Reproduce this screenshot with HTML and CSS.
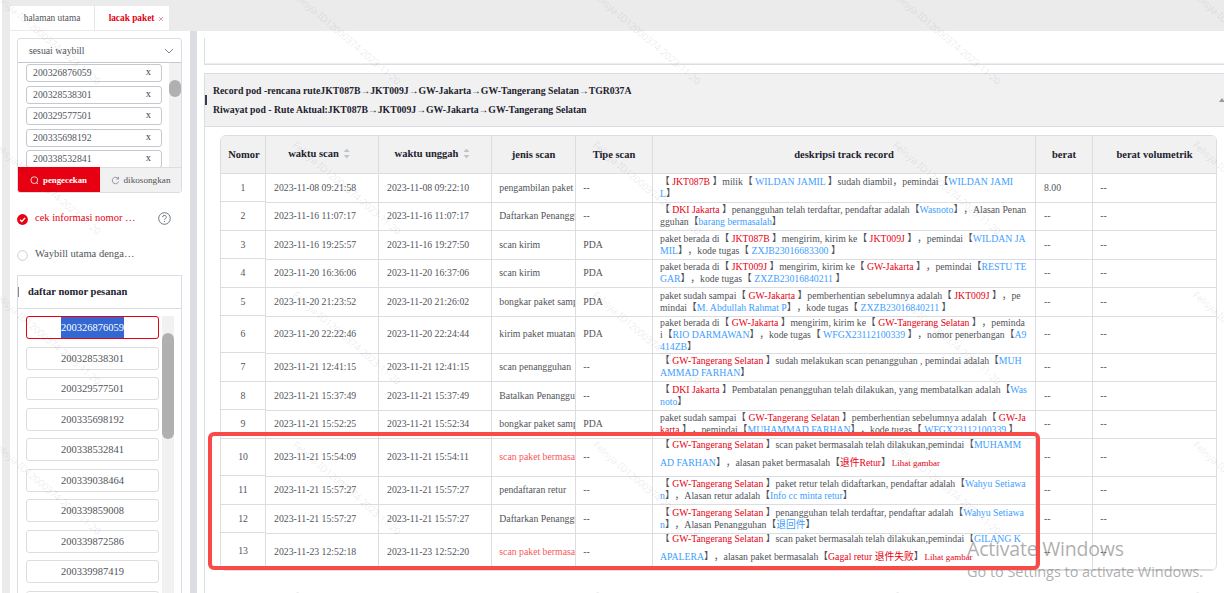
FILE: index.html
```
<!DOCTYPE html>
<html lang="id">
<head>
<meta charset="utf-8">
<title>lacak paket</title>
<link rel="stylesheet" href="styles.css">
</head>
<body>
<div class="app">
  <div class="rail"></div>
  <div class="page">
    <nav class="tabs">
      <div class="tab">halaman utama</div>
      <div class="tab active">lacak paket<svg class="close" viewBox="0 0 6 6"><path d="M1 1l4 4M5 1l-4 4"/></svg></div>
    </nav>
    <div class="body">
      <aside class="side">
        <div class="search">
          <div class="select">sesuai waybill<svg class="chev" viewBox="0 0 10 6"><path d="M1 1l4 4 4-4"/></svg></div>
          <div class="tags">
            <div class="taglist">
              <div class="tag">200326876059<span>x</span></div>
              <div class="tag">200328538301<span>x</span></div>
              <div class="tag">200329577501<span>x</span></div>
              <div class="tag">200335698192<span>x</span></div>
              <div class="tag">200338532841<span>x</span></div>
            </div>
            <div class="track"><div class="thumb"></div></div>
          </div>
          <div class="buttons">
            <div class="btn primary"><svg viewBox="0 0 10 10"><circle cx="4.8" cy="4.6" r="3.8"/><path d="M7.2 7.2l1.8 1.8"/></svg>pengecekan</div>
            <div class="btn"><svg viewBox="0 0 10 10"><path d="M8 3A3.6 3.6 0 1 0 8.5 6M8.4 1v2.4H6"/></svg>dikosongkan</div>
          </div>
        </div>
        <div class="option on"><svg class="radio" viewBox="0 0 12 12"><circle cx="6" cy="6" r="5.9" fill="#e60012"/><path d="M3.3 6.2l2 1.9 3.5-3.9" fill="none" stroke="#fff" stroke-width="1.5"/></svg><span>cek informasi nomor …</span>
          <svg class="help" viewBox="0 0 13 13"><circle cx="6.5" cy="6.5" r="5.8"/><path d="M4.7 5.2a1.8 1.8 0 1 1 2.6 1.5q-.8.4-.8 1.2M6.5 8.9v1"/></svg></div>
        <div class="option two"><svg class="radio" viewBox="0 0 12 12"><circle cx="6" cy="6" r="5.3" fill="#fff" stroke="#c5c8ce"/></svg><span>Waybill utama denga…</span></div>
        <div class="orders">
          <div class="orders-title">daftar nomor pesanan</div>
          <div class="orders-body">
            <div class="orders-list">
              <div class="order sel"><span>200326876059</span></div>
              <div class="order">200328538301</div>
              <div class="order">200329577501</div>
              <div class="order">200335698192</div>
              <div class="order">200338532841</div>
              <div class="order">200339038464</div>
              <div class="order">200339859008</div>
              <div class="order">200339872586</div>
              <div class="order">200339987419</div>
              <div class="order"></div>
            </div>
            <div class="track tall"><div class="thumb"></div></div>
          </div>
        </div>
      </aside>
      <div class="splitter"></div>
      <main class="main">
        <div class="upper"></div>
        <section class="panel">
          <header class="routes">
            <div class="route-text">
              <div class="r1">Record pod -rencana ruteJKT087B→JKT009J→GW-Jakarta→GW-Tangerang Selatan→TGR037A</div>
              <div class="r2">Riwayat pod - Rute Aktual:JKT087B→JKT009J→GW-Jakarta→GW-Tangerang Selatan</div>
            </div>
            <div class="fold"></div>
          </header>
          <div class="table">
            <div class="numbers">
              <div class="th">Nomor</div>
              <div class="n h28">1</div><div class="n h29">2</div><div class="n h28">3</div><div class="n h29">4</div><div class="n h28">5</div><div class="n h37">6</div><div class="n h29">7</div><div class="n h28">8</div><div class="n h29">9</div><div class="n h37">10</div><div class="n h29">11</div><div class="n h28">12</div><div class="n h37">13</div>
            </div>
            <div class="rows">
              <div class="row head">
                <div class="th sortable">waktu scan<i class="sort"></i></div><div class="th sortable">waktu unggah<i class="sort"></i></div><div class="th">jenis scan</div><div class="th">Tipe scan</div><div class="th">deskripsi track record</div><div class="th">berat</div><div class="th">berat volumetrik</div>
              </div>
              <div class="row h29"><div>2023-11-08 09:21:58</div><div>2023-11-08 09:22:10</div><div>pengambilan paket</div><div>--</div>
                <div class="desc"><p>【 <b>JKT087B</b> 】milik【 <a>WILDAN JAMIL</a> 】sudah diambil，pemindai【<a>WILDAN JAMI</a></p><p><a>L</a>】</p></div><div>8.00</div><div>--</div></div>
              <div class="row h28"><div>2023-11-16 11:07:17</div><div>2023-11-16 11:07:17</div><div>Daftarkan Penangguhan</div><div>--</div>
                <div class="desc"><p>【 <b>DKI Jakarta</b> 】penangguhan telah terdaftar, pendaftar adalah【<a>Wasnoto</a>】，Alasan Penan</p><p>gguhan【<a>barang bermasalah</a>】</p></div><div>--</div><div>--</div></div>
              <div class="row h29"><div>2023-11-16 19:25:57</div><div>2023-11-16 19:27:50</div><div>scan kirim</div><div>PDA</div>
                <div class="desc"><p>paket berada di【 <b>JKT087B</b> 】mengirim, kirim ke【 <b>JKT009J</b> 】，pemindai【<a>WILDAN JA</a></p><p><a>MIL</a>】，kode tugas【 <a>ZXJB23016683300</a> 】</p></div><div>--</div><div>--</div></div>
              <div class="row h28"><div>2023-11-20 16:36:06</div><div>2023-11-20 16:37:06</div><div>scan kirim</div><div>PDA</div>
                <div class="desc"><p>paket berada di【 <b>JKT009J</b> 】mengirim, kirim ke【 <b>GW-Jakarta</b> 】，pemindai【<a>RESTU TE</a></p><p><a>GAR</a>】，kode tugas【 <a>ZXZB23016840211</a> 】</p></div><div>--</div><div>--</div></div>
              <div class="row h29"><div>2023-11-20 21:23:52</div><div>2023-11-20 21:26:02</div><div>bongkar paket sampai</div><div>PDA</div>
                <div class="desc"><p>paket sudah sampai【 <b>GW-Jakarta</b> 】pemberhentian sebelumnya adalah【 <b>JKT009J</b> 】，pe</p><p>mindai【<a>M. Abdullah Rahmat P</a>】，kode tugas【 <a>ZXZB23016840211</a> 】</p></div><div>--</div><div>--</div></div>
              <div class="row h37"><div>2023-11-20 22:22:46</div><div>2023-11-20 22:24:44</div><div>kirim paket muatan</div><div>PDA</div>
                <div class="desc"><p>paket berada di【 <b>GW-Jakarta</b> 】mengirim, kirim ke【 <b>GW-Tangerang Selatan</b> 】，peminda</p><p>i【<a>RIO DARMAWAN</a>】，kode tugas【 <a>WFGX23112100339</a> 】，nomor penerbangan【<a>A9</a></p><p><a>414ZB</a>】</p></div><div>--</div><div>--</div></div>
              <div class="row h28"><div>2023-11-21 12:41:15</div><div>2023-11-21 12:41:15</div><div>scan penangguhan</div><div>--</div>
                <div class="desc"><p>【 <b>GW-Tangerang Selatan</b> 】sudah melakukan scan penangguhan , pemindai adalah【<a>MUH</a></p><p><a>AMMAD FARHAN</a>】</p></div><div>--</div><div>--</div></div>
              <div class="row h29"><div>2023-11-21 15:37:49</div><div>2023-11-21 15:37:49</div><div>Batalkan Penangguhan</div><div>--</div>
                <div class="desc"><p>【 <b>DKI Jakarta</b> 】Pembatalan penangguhan telah dilakukan, yang membatalkan adalah【<a>Was</a></p><p><a>noto</a>】</p></div><div>--</div><div>--</div></div>
              <div class="row h28"><div>2023-11-21 15:52:25</div><div>2023-11-21 15:52:34</div><div>bongkar paket sampai</div><div>PDA</div>
                <div class="desc"><p>paket sudah sampai【 <b>GW-Tangerang Selatan</b> 】pemberhentian sebelumnya adalah【 <b>GW-Ja</b></p><p><b>karta</b> 】，pemindai【<a>MUHAMMAD FARHAN</a>】，kode tugas【 <a>WFGX23112100339</a> 】</p></div><div>--</div><div>--</div></div>
              <div class="row h38"><div>2023-11-21 15:54:09</div><div>2023-11-21 15:54:11</div><div class="warn">scan paket bermasalah</div><div>--</div>
                <div class="desc loose"><p>【 <b>GW-Tangerang Selatan</b> 】scan paket bermasalah telah dilakukan,pemindai【<a>MUHAMM</a></p><p><a>AD FARHAN</a>】，alasan paket bermasalah【<b>退件Retur</b>】<em>Lihat gambar</em></p></div><div>--</div><div>--</div></div>
              <div class="row h28"><div>2023-11-21 15:57:27</div><div>2023-11-21 15:57:27</div><div>pendaftaran retur</div><div>--</div>
                <div class="desc"><p>【 <b>GW-Tangerang Selatan</b> 】paket retur telah didaftarkan, pendaftar adalah【<a>Wahyu Setiawa</a></p><p><a>n</a>】，Alasan retur adalah【<a>Info cc minta retur</a>】</p></div><div>--</div><div>--</div></div>
              <div class="row h29"><div>2023-11-21 15:57:27</div><div>2023-11-21 15:57:27</div><div>Daftarkan Penangguhan</div><div>--</div>
                <div class="desc"><p>【 <b>GW-Tangerang Selatan</b> 】penangguhan telah terdaftar, pendaftar adalah【<a>Wahyu Setiawa</a></p><p><a>n</a>】，Alasan Penangguhan【<a>退回件</a>】</p></div><div>--</div><div>--</div></div>
              <div class="row h36"><div>2023-11-23 12:52:18</div><div>2023-11-23 12:52:20</div><div class="warn">scan paket bermasalah</div><div>--</div>
                <div class="desc loose"><p>【 <b>GW-Tangerang Selatan</b> 】scan paket bermasalah telah dilakukan,pemindai【<a>GILANG K</a></p><p><a>APALERA</a>】，alasan paket bermasalah【<b>Gagal retur 退件失败</b>】<em>Lihat gambar</em></p></div><div>--</div><div>--</div></div>
            </div>
          </div>
        </section>
      </main>
    </div>
  </div>
  <svg class="overlay" width="1224" height="593">
    <defs>
      <g id="m"><text class="mark" transform="translate(-8 -4) rotate(40.4)" textLength="138">Felisya-ID12000374-2023-11-20</text></g>
      <g id="col"><use href="#m" y="0"/><use href="#m" y="150"/><use href="#m" y="300"/><use href="#m" y="450"/><use href="#m" y="600"/></g>
    </defs>
    <use href="#col"/><use href="#col" x="300"/><use href="#col" x="600"/><use href="#col" x="900"/><use href="#col" x="1200"/>
    <text class="act big" x="967" y="556" textLength="157">Activate Windows</text>
    <text class="act" x="967" y="577" textLength="236">Go to Settings to activate Windows.</text>
  </svg>
  <div class="callout"></div>
</div>
</body>
</html>
```
FILE: styles.css
```
* { box-sizing: border-box; }
body { margin: 0; background: #fff; font: 9.75px/12px "Liberation Serif", "Noto Sans CJK SC", serif; color: #515459; text-spacing-trim: space-all; font-feature-settings: "chws" 0, "halt" 0; }
p { margin: 0; }
.app { position: relative; width: 1224px; height: 593px; overflow: hidden; display: flex; padding-left: 2px; }
.rail { width: 8px; background: #ebebeb; flex: none; }
.page { flex: 1; min-width: 0; display: flex; flex-direction: column; }
.tabs { height: 31px; background: #ebebeb; padding-top: 6px; display: flex; flex: none; }
.tab { width: 85px; height: 24px; background: #fff; border-right: 1px solid #e6e6e6; display: flex; align-items: center; justify-content: center; font-size: 9.3px; }
.tab.active { width: 74px; border: 0; color: #e60012; font-weight: bold; padding-left: 9px; }
.close { width: 6px; height: 6px; margin-left: 4px; margin-top: 2px; stroke: #ee7b84; stroke-width: .8; }
.body { flex: 1; min-height: 0; display: flex; }
.side { width: 180px; padding: 7px 8px 0 7px; flex: none; }
.search { height: 155px; border: 1px solid #dcdde0; border-radius: 3px; overflow: hidden; display: flex; flex-direction: column; }
.select { height: 24px; border-bottom: 1px solid #c5c8ce; padding: 0 7px 0 11px; display: flex; align-items: center; justify-content: space-between; flex: none; }
.chev { width: 10px; height: 6px; fill: none; stroke: #808695; }
.tags { height: 104px; display: flex; overflow: hidden; flex: none; }
.taglist { padding: 1.4px 0 0 8px; width: 151px; display: flex; flex-direction: column; gap: 3.5px; }
.tag { width: 136px; height: 18px; flex: none; border: 1px solid #c5c8ce; border-radius: 3px; padding: 0 10px 0 6px; display: flex; align-items: center; justify-content: space-between; }
.tag span { font-size: 10.5px; color: #444; margin-top: -2px; }
.track { width: 12px; background: #f1f1f1; padding-top: 17px; }
.thumb { height: 17px; border-radius: 6px; background: #b0b0b0; }
.buttons { flex: 1; display: flex; }
.btn { flex: 1; background: #f1f1f1; border-top: 1px solid #dcdde0; display: flex; align-items: center; justify-content: center; gap: 4px; font-size: 9.2px; }
.btn svg { width: 9px; height: 9px; fill: none; stroke: #808695; stroke-width: .9; }
.btn.primary { flex: none; width: 83px; margin-left: -1px; background: #e60012; border-color: #e60012; color: #fff; font-weight: bold; font-size: 8.8px; }
.btn.primary svg { stroke: #fff; }
.option { display: flex; align-items: center; font-size: 10.5px; height: 14px; margin-top: 18px; position: relative; }
.option span { margin-left: 7px; width: 123px; }
.radio { width: 11px; height: 11px; position: relative; top: 1px; }
.option.on { color: #e60012; }
.option.two { margin-top: 22px; }
.help { width: 13px; height: 13px; fill: none; stroke: #6f7783; }
.orders { margin-top: 14px; height: 330px; border: 1px solid #dcdde0; }
.orders-title { height: 33px; border-bottom: 1px solid #dcdde0; padding-left: 10px; font: bold 10.5px/32px "Liberation Serif", serif; color: #22222f; background: linear-gradient(#808695, #808695) 0 11px / 1px 10px no-repeat; }
.orders-body { display: flex; padding: 7px 0 0 8px; gap: 3px; }
.orders-list { width: 133px; display: flex; flex-direction: column; gap: 7.5px; }
.order { height: 23px; border: 1px solid #dcdde0; border-radius: 3px; font-size: 10.5px; line-height: 21px; text-align: center; }
.order.sel { border-color: #e60012; color: #fff; }
.order.sel span { display: inline-block; background: #3367d1; }
.track.tall { height: 300px; padding-top: 17px; }
.tall .thumb { height: 106px; }
.splitter { width: 7px; background: #dcdde2; flex: none; }
.main { flex: 1; min-width: 0; padding: 7px 0 0 7px; display: flex; flex-direction: column; gap: 8px; }
.upper { height: 27px; border-left: 1px solid #dcdde2; border-bottom: 1px solid #dcdde2; box-shadow: inset 0 -1px #ececf1; flex: none; }
.panel { flex: 1; border-left: 1px solid #dcdde2; border-top: 1px solid #dcdde2; min-height: 0; }
.routes { height: 53px; background: linear-gradient(#3a3a4a, #3a3a4a) 0 21px / 2px 10px no-repeat #f1f1f1; border-bottom: 1px solid #dcdde2; display: flex; align-items: center; padding-left: 8px; justify-content: space-between; }
.route-text { font: bold 9.75px/19px "Liberation Serif", serif; color: #22222f; white-space: nowrap; padding-bottom: 1px; }
.fold { border: 3px solid transparent; border-bottom: 4px solid #999; border-top: 0; margin-right: -1px; }
.table { margin: 8px 0 0 15px; width: 997px; height: 436px; border: 1px solid #dcdde0; border-radius: 6px; overflow: hidden; display: flex; }
.numbers { width: 45px; border-right: 1px solid #dcdde0; flex: none; }
.numbers .th { padding-left: 2px; }
.n { border-bottom: 1px solid #dcdde0; display: flex; align-items: center; justify-content: center; }
.th { height: 38px; background: #f1f1f1; border-bottom: 1px solid #dcdde0; font-weight: bold; font-size: 10.5px; color: #22222f; display: flex; align-items: center; justify-content: center; white-space: nowrap; }
.rows { flex: 1; }
.row { display: grid; grid-template-columns: 113px 113px 84px 77px 383px 57px 123px; border-bottom: 1px solid #dcdde0; }
.row.head { border: 0; }
.row > div { border-right: 1px solid #dcdde0; padding-left: 8px; display: flex; align-items: center; overflow: hidden; white-space: nowrap; }
.row > div:nth-child(3), .row > div:nth-child(4), .row > div:nth-child(7) { padding-left: 7.3px; }
.row.h28 > div, .row.h37 > div, .row.h38 > div { padding-bottom: 2px; }
.row.h37 > div.desc { padding-bottom: 0; }
.row > div.th { padding: 0; }
.row > div.sortable { padding: 0 6px 2px 0; }
.row > div:last-child { border-right: 0; }
.row > div.desc { flex-direction: column; align-items: flex-start; justify-content: center; padding-left: 7px; }
.row > div.desc.loose { line-height: 18px; padding-bottom: 8px; }
.desc b { font-weight: normal; color: #e60012; }
.desc a { color: #409eff; }
.desc em { font-style: normal; font-size: 9px; color: #e60012; margin-left: 1px; }
.row > div.warn { color: #f8585c; }
.sort { width: 6px; height: 10px; margin-left: 5px; background: #c0c4cc; clip-path: polygon(50% 0, 100% 35%, 0 35%, 0 65%, 100% 65%, 50% 100%, 0 65%, 0 35%); }
.h28 { height: 28px; } .h29 { height: 29px; } .h36 { height: 36px; } .h37 { height: 37px; } .h38 { height: 38px; }
.overlay { position: absolute; left: 0; top: 0; pointer-events: none; }
.mark { font: 10px "Noto Sans", sans-serif; fill: rgba(0, 0, 0, .09); }
.act { font: 14.5px "Open Sans", sans-serif; fill: rgba(120, 120, 120, .6); }
.act.big { font-size: 19.5px; }
.callout { position: absolute; left: 208px; top: 432px; width: 832px; height: 138px; border: 4px solid #f84b48; border-radius: 6px; }
```
